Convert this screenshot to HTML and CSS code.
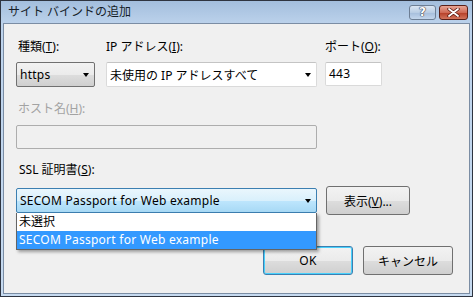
FILE: index.html
```html
<!DOCTYPE html>
<html lang="ja">
<head>
  <meta charset="UTF-8">
  <title>サイト バインドの追加</title>
  <link rel="stylesheet" href="styles.css">
</head>
<body>
  <div class="window">
    <!-- Title bar -->
    <div class="titlebar">
      <span class="title">サイト バインドの追加</span>
      <div class="caption-buttons">
        <span class="cap-btn help">?</span>
        <span class="cap-btn close">
          <svg width="13" height="9" viewBox="0 0 13 9">
            <path d="M2 1 L11 8 M11 1 L2 8" stroke="#5a1a12" stroke-width="3.4" stroke-linecap="round"/>
            <path d="M2 1 L11 8 M11 1 L2 8" stroke="#fff" stroke-width="1.8" stroke-linecap="round"/>
          </svg>
        </span>
      </div>
    </div>

    <!-- Client area -->
    <div class="client">
      <div class="row-top">
        <div class="field f-type">
          <label>種類(<u>T</u>):</label>
          <div class="combo combo-btn"><span class="latin">https</span><i class="arrow"></i></div>
        </div>
        <div class="field f-ip">
          <label>IP アドレス(<u>I</u>):</label>
          <div class="combo combo-white"><span>未使用の IP アドレスすべて</span><i class="arrow"></i></div>
        </div>
        <div class="field f-port">
          <label>ポート(<u>O</u>):</label>
          <div class="textbox latin">443</div>
        </div>
      </div>

      <div class="field f-host">
        <label class="disabled">ホスト名(<u>H</u>):</label>
        <div class="textbox textbox-disabled"></div>
      </div>

      <div class="field f-ssl">
        <label>SSL 証明書(<u>S</u>):</label>
        <div class="ssl-row">
          <div class="ssl-wrap">
            <div class="combo combo-focus"><span class="latin">SECOM Passport for Web example</span><i class="arrow"></i></div>
            <!-- Open dropdown list -->
            <ul class="dropdown">
              <li>未選択</li>
              <li class="selected latin">SECOM Passport for Web example</li>
            </ul>
          </div>
          <button class="btn btn-view">表示(<u>V</u>)...</button>
        </div>
      </div>

      <div class="actions">
        <button class="btn btn-default latin">OK</button>
        <button class="btn">キャンセル</button>
      </div>
    </div>
  </div>
</body>
</html>
```

FILE: styles.css
```css
/* Dialog window */
body {
  margin: 0;
  font-family: "Noto Sans", "Noto Sans CJK JP", sans-serif;
  font-size: 12px;
  color: #000;
  background: #fff;
}

.latin {
  letter-spacing: 0.25px;
}

.window {
  width: 473px;
  height: 297px;
  box-sizing: border-box;
  border: 1px solid #2e3440;
  padding: 0 2px 2px;
  background: linear-gradient(#a3bedd, #bdd3ec 24px, #c6daf0);
  display: flex;
  flex-direction: column;
}

.titlebar {
  height: 22px;
  display: flex;
  align-items: flex-start;
  padding: 0 2px 0 5px;
}

.title {
  margin-top: 3px;
  font-size: 12px;
  line-height: 16px;
  color: #151d28;
}

.caption-buttons {
  margin-left: auto;
  margin-top: 4px;
  display: flex;
  gap: 3px;
}

.cap-btn {
  width: 27px;
  height: 15px;
  box-sizing: border-box;
  border: 1px solid #6d7e94;
  border-radius: 3px;
  display: flex;
  align-items: center;
  justify-content: center;
}

.help {
  background: linear-gradient(#dbe6f3, #b9cde4 50%, #a5bddb 51%, #c3d6ec);
  color: #fff;
  font-family: "DejaVu Sans", sans-serif;
  font-weight: bold;
  font-size: 12px;
  line-height: 13px;
  text-shadow: 0 0 1px #334, 0 0 1px #334, 0 0 1px #334;
}

.close {
  width: 29px;
  border-color: #5a2018;
  background: linear-gradient(#e8a595, #cf6a55 50%, #b53d26 51%, #d2745c);
}

.client {
  flex: 1;
  background: #f0f0f0;
  border: 1px solid #7b8da4;
  padding: 15px 16px 0 12px;
}

/* Fields */
label {
  display: block;
  line-height: 16px;
  margin-left: 2px;
}

label.disabled {
  color: #a3a3a3;
}

.row-top {
  display: flex;
}

.f-type { width: 79px; }
.f-ip { width: 211px; margin-left: 11px; }
.f-port { width: 57px; margin-left: 8px; }
.f-ip label, .f-port label { margin-left: 0; }

.row-top label {
  margin-bottom: 7px;
}

.combo {
  height: 25px;
  box-sizing: border-box;
  display: flex;
  align-items: center;
  justify-content: space-between;
  padding: 0 5px 0 3px;
  border-radius: 2px;
  white-space: nowrap;
}

.combo-btn {
  border: 1px solid #707070;
  background: linear-gradient(#f2f2f2, #ebebeb 50%, #dddddd 51%, #cfcfcf);
}

.combo-white {
  border: 1px solid #dadada;
  border-top-color: #c4c4c4;
  background: #fff;
}

.combo-focus {
  border: 1px solid #3c7fb1;
  background: linear-gradient(#eaf6fd, #d9f0fc 50%, #bee6fd 51%, #a7d9f5);
}

.arrow {
  width: 0;
  height: 0;
  border-left: 3.5px solid transparent;
  border-right: 3.5px solid transparent;
  border-top: 4px solid #000;
}

.textbox {
  height: 24px;
  box-sizing: border-box;
  border: 1px solid #dadada;
  border-top-color: #c4c4c4;
  border-radius: 2px;
  background: #fff;
  padding: 0 3px;
  line-height: 22px;
}

.f-host {
  margin-top: 14px;
  width: 301px;
}

.f-host label {
  margin-bottom: 8px;
}

.textbox-disabled {
  background: #f0f0f0;
  border-color: #adadad;
}

.f-ssl {
  margin-top: 13px;
}

.f-ssl label {
  margin-left: 3px;
  margin-bottom: 8px;
}

.ssl-row {
  display: flex;
  align-items: center;
}

.ssl-wrap {
  position: relative;
  width: 301px;
}

.dropdown {
  position: absolute;
  top: 25px;
  left: 0;
  width: 301px;
  box-sizing: border-box;
  margin: 0;
  padding: 0;
  list-style: none;
  background: #fff;
  border: 1px solid #646464;
  border-top: none;
  box-shadow: 2px 2px 3px rgba(0, 0, 0, 0.35);
  z-index: 2;
}

.dropdown li {
  height: 18px;
  line-height: 18px;
  padding-left: 2px;
  white-space: nowrap;
}

.dropdown li.selected {
  background: #3399ff;
  color: #fff;
}

/* Buttons */
.btn {
  width: 90px;
  height: 29px;
  font-family: inherit;
  font-size: 12px;
  color: #000;
  border: 1px solid #707070;
  border-radius: 3px;
  background: linear-gradient(#f2f2f2, #ebebeb 50%, #dddddd 51%, #cfcfcf);
  padding: 0;
}

.btn-view {
  width: 84px;
  margin-left: 9px;
}

.btn-default {
  border-color: #3c7fb1;
  box-shadow: inset 0 0 0 1px #48d1fc;
}

.actions {
  display: flex;
  justify-content: flex-end;
  gap: 10px;
  margin-top: 31px;
}
```
